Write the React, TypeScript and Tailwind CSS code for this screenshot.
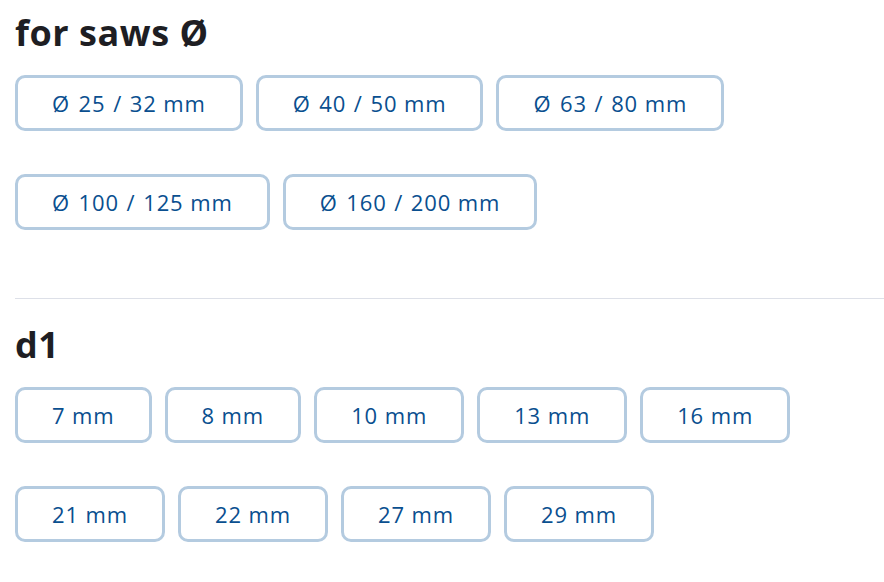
import React from 'react';

const sawSizes = ['Ø 25 / 32 mm', 'Ø 40 / 50 mm', 'Ø 63 / 80 mm', 'Ø 100 / 125 mm', 'Ø 160 / 200 mm'];
const d1Sizes = ['7 mm', '8 mm', '10 mm', '13 mm', '16 mm', '21 mm', '22 mm', '27 mm', '29 mm'];

// Ø and "/" sit a bit wider in the original font
function Label({ text }: { text: string }) {
  if (!text.startsWith('Ø')) return <>{text}</>;
  const [a, b] = text.slice(2).split(' / ');
  return (
    <>
      <span className="pr-[2px]">Ø</span> {a} <span className="px-[1px]">/</span> {b}
    </>
  );
}

function OptionGroup({ title, options }: { title: string; options: string[] }) {
  return (
    <div>
      <h2 className="text-[36px] font-bold leading-[40px] tracking-[0.015em] text-[#1e1e23]">{title}</h2>
      <div className="mt-[22px] flex flex-wrap gap-x-[13px] gap-y-[43px]">
        {options.map((o) => (
          <button
            key={o}
            className="h-[56px] rounded-[10px] border-[3px] border-[#b4cbe0] bg-white px-[34px] text-[22px] tracking-[0.04em] text-[#0a4f8f]"
          >
            <Label text={o} />
          </button>
        ))}
      </div>
    </div>
  );
}

export default function App() {
  return (
    <div className="min-h-screen bg-white pl-[15px] pt-[13px]" style={{ fontFamily: '"Open Sans", "Noto Sans", sans-serif' }}>
      <OptionGroup title="for saws Ø" options={sawSizes} />
      <div className="mt-[68px] mb-[26px] border-t border-[#dde0e8]" />
      <OptionGroup title="d1" options={d1Sizes} />
    </div>
  );
}
